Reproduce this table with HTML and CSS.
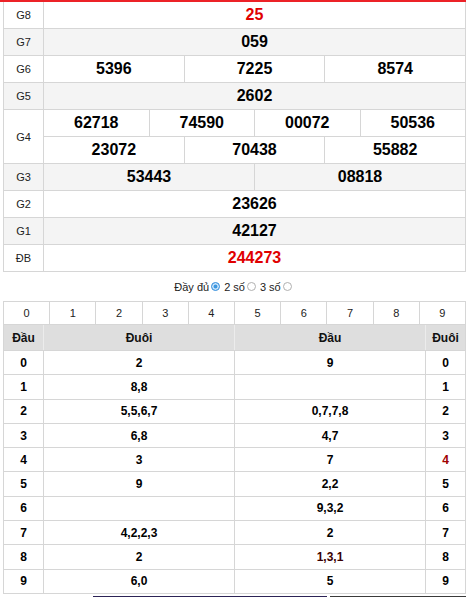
FILE: index.html
```html
<!DOCTYPE html>
<html lang="vi">
<head>
<meta charset="utf-8">
<title>Kết quả</title>
<link rel="stylesheet" href="styles.css">
</head>
<body>
<div class="page">
  <div class="topbar"></div>
  <div class="results">
    <div class="row"><div class="lbl">G8</div><div class="vals"><div class="v red">25</div></div></div>
    <div class="row alt"><div class="lbl">G7</div><div class="vals"><div class="v">059</div></div></div>
    <div class="row"><div class="lbl">G6</div><div class="vals"><div class="v">5396</div><div class="v">7225</div><div class="v">8574</div></div></div>
    <div class="row alt"><div class="lbl">G5</div><div class="vals"><div class="v">2602</div></div></div>
    <div class="row g4"><div class="lbl">G4</div>
      <div class="stack">
        <div class="vals"><div class="v">62718</div><div class="v">74590</div><div class="v">00072</div><div class="v">50536</div></div>
        <div class="vals"><div class="v">23072</div><div class="v">70438</div><div class="v">55882</div></div>
      </div>
    </div>
    <div class="row alt"><div class="lbl">G3</div><div class="vals"><div class="v">53443</div><div class="v">08818</div></div></div>
    <div class="row"><div class="lbl">G2</div><div class="vals"><div class="v">23626</div></div></div>
    <div class="row alt"><div class="lbl">G1</div><div class="vals"><div class="v">42127</div></div></div>
    <div class="row"><div class="lbl">ĐB</div><div class="vals"><div class="v red">244273</div></div></div>
  </div>

  <div class="mode">
    <label class="opt">Đầy đủ<input type="radio" name="mode" checked></label>
    <label class="opt">2 số<input type="radio" name="mode"></label>
    <label class="opt">3 số<input type="radio" name="mode"></label>
  </div>

  <div class="loto">
    <div class="digits"><span>0</span><span>1</span><span>2</span><span>3</span><span>4</span><span>5</span><span>6</span><span>7</span><span>8</span><span>9</span></div>
    <div class="lrow head"><div>Đầu</div><div>Đuôi</div><div>Đầu</div><div>Đuôi</div></div>
    <div class="lrow"><div>0</div><div>2</div><div>9</div><div>0</div></div>
    <div class="lrow"><div>1</div><div>8,8</div><div></div><div>1</div></div>
    <div class="lrow"><div>2</div><div>5,5,6,7</div><div>0,7,7,8</div><div>2</div></div>
    <div class="lrow"><div>3</div><div>6,8</div><div>4,7</div><div>3</div></div>
    <div class="lrow"><div>4</div><div>3</div><div>7</div><div class="hl">4</div></div>
    <div class="lrow"><div>5</div><div>9</div><div>2,2</div><div>5</div></div>
    <div class="lrow"><div>6</div><div></div><div>9,3,2</div><div>6</div></div>
    <div class="lrow"><div>7</div><div>4,2,2,3</div><div>2</div><div>7</div></div>
    <div class="lrow"><div>8</div><div>2</div><div class="dk">1,3,1</div><div>8</div></div>
    <div class="lrow"><div>9</div><div>6,0</div><div>5</div><div>9</div></div>
  </div>

  <div class="strip"><div class="s1"></div><div class="s2"></div></div>
</div>
</body>
</html>
```

FILE: styles.css
```css
html, body {
  margin: 0;
  padding: 0;
  background: #fff;
}
body {
  font-family: "Liberation Sans", Arial, sans-serif;
  color: #111;
}
.page {
  width: 466px;
}
.topbar {
  height: 2px;
  background: #ec2227;
}
.results {
  margin-left: 3px;
  width: 463px;
  box-sizing: border-box;
  background: #d6d6d6;
  padding: 0 1px 1px 1px;
  display: flex;
  flex-direction: column;
  gap: 1px;
}
.row {
  display: flex;
  gap: 1px;
  height: 26px;
}
.row.g4 {
  height: 53px;
}
.lbl {
  width: 39px;
  flex: none;
  background: #fff;
  display: flex;
  align-items: center;
  justify-content: center;
  font-size: 11px;
  color: #222;
}
.vals {
  flex: 1;
  display: flex;
  gap: 1px;
  min-width: 0;
}
.stack {
  flex: 1;
  display: flex;
  flex-direction: column;
  gap: 1px;
}
.stack .vals {
  height: 26px;
  flex: none;
}
.v {
  flex: 1 1 0;
  min-width: 0;
  background: #fff;
  display: flex;
  align-items: center;
  justify-content: center;
  font-weight: bold;
  font-size: 16px;
  color: #000;
}
.row.alt .lbl,
.row.alt .v {
  background: #f4f4f4;
}
.v.red {
  color: #e00000;
}

.mode {
  height: 29px;
  display: flex;
  align-items: center;
  justify-content: center;
  font-size: 11px;
  color: #222;
}
.opt {
  display: flex;
  align-items: center;
}
.opt input {
  appearance: none;
  -webkit-appearance: none;
  width: 9px;
  height: 9px;
  margin: 0 4px 0 2px;
  border: 1px solid #b0b0b0;
  border-radius: 50%;
  background: #fff;
  box-sizing: border-box;
}
.opt:last-child input {
  margin-right: 0;
}
.opt input:checked {
  border-color: #4a9ae0;
  background: #3b97e0;
  box-shadow: inset 0 0 0 1.5px #cfe6fa;
}

.loto {
  margin-left: 3px;
  width: 463px;
  box-sizing: border-box;
  background: #d6d6d6;
  padding: 1px;
  display: flex;
  flex-direction: column;
  gap: 1px;
}
.digits {
  display: flex;
  gap: 1px;
  height: 22px;
}
.digits span {
  flex: 1 1 0;
  background: #fff;
  display: flex;
  align-items: center;
  justify-content: center;
  font-size: 11px;
  color: #222;
}
.lrow {
  display: grid;
  grid-template-columns: 39px 1fr 1fr 39px;
  gap: 1px;
  height: 23.3px;
}
.lrow > div {
  background: #fff;
  display: flex;
  align-items: center;
  justify-content: center;
  font-weight: bold;
  font-size: 12px;
  color: #000;
}
.lrow.head {
  height: 25px;
  background: #ececec;
}
.lrow.head > div {
  background: #dedede;
  color: #111;
}
.lrow > div.hl {
  color: #a00000;
}
.lrow > div.dk {
  color: #3a0000;
}

.strip {
  margin-top: 2px;
  display: flex;
  height: 2px;
}
.s1 {
  margin-left: 93px;
  width: 234px;
  background: #2c2356;
}
.s2 {
  margin-left: 3px;
  width: 136px;
  background: #3a3a3a;
}
```
